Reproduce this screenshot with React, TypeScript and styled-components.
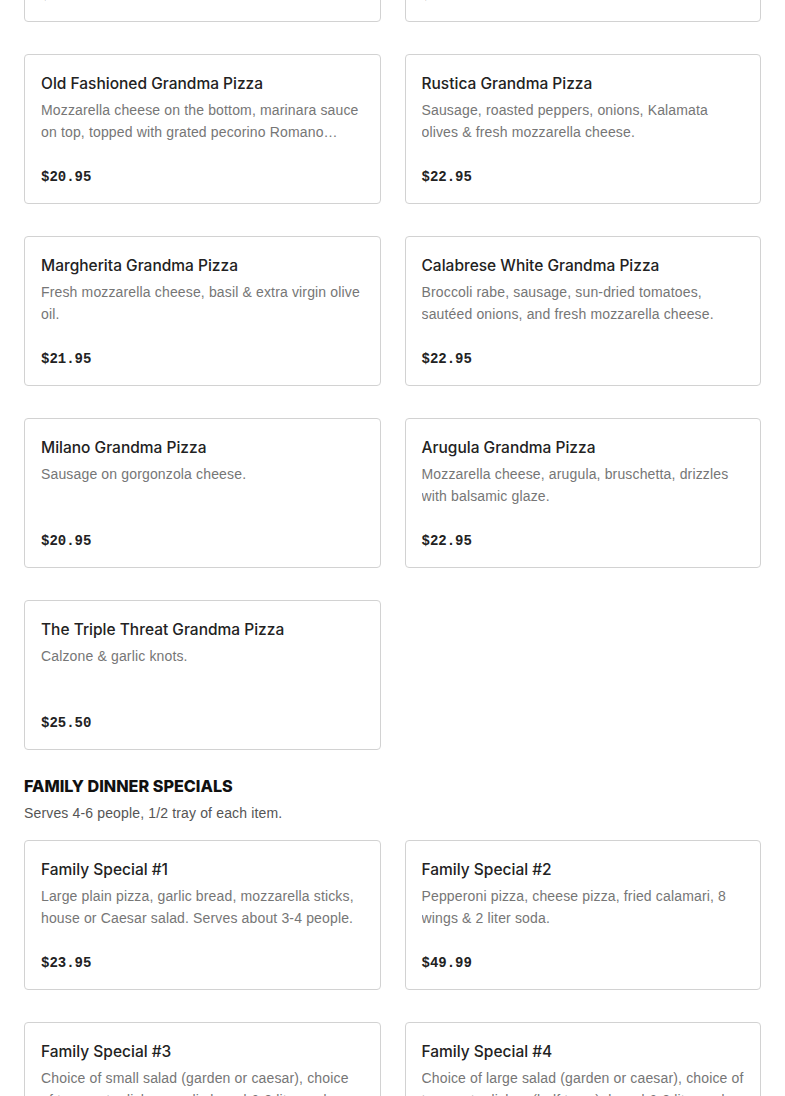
import React from 'react'
import styled, { createGlobalStyle } from 'styled-components'

const GlobalStyle = createGlobalStyle`
  html, body {
    margin: 0;
    padding: 0;
    background: #ffffff;
  }
  body {
    font-family: 'Liberation Sans', Arial, sans-serif;
    color: #222222;
    overflow: hidden;
  }
`

const Page = styled.div`
  display: flex;
  flex-direction: column;
  padding: 0 24px;
  /* the menu is scrolled part-way down */
  margin-top: -128px;
`

const Section = styled.section`
  display: flex;
  flex-direction: column;
  margin-bottom: 24px;
`

const SectionTitle = styled.h2`
  margin: 0;
  font-family: 'Inter', 'Liberation Sans', sans-serif;
  font-size: 16.2px;
  font-weight: 800;
  line-height: 24px;
  text-transform: uppercase;
  color: #111111;
`

const SectionNote = styled.p`
  margin: 5px 0 17px;
  font-size: 14px;
  line-height: 20px;
  letter-spacing: 0.15px;
  color: #555555;
`

const Grid = styled.div`
  display: grid;
  grid-template-columns: 1fr 1fr;
  column-gap: 24px;
  row-gap: 32px;
`

const Card = styled.div`
  box-sizing: border-box;
  height: 150px;
  display: flex;
  flex-direction: column;
  padding: 16px 16px 15px;
  border: 1px solid #d2d2d2;
  border-radius: 4px;
  background: #ffffff;
`

const ItemName = styled.div`
  margin-top: 1px;
  font-family: 'Inter', 'Liberation Sans', sans-serif;
  font-size: 15.5px;
  font-weight: 500;
  line-height: 24px;
  color: #222222;
`

const ItemDesc = styled.div`
  margin-top: 3px;
  min-height: 44px;
  font-size: 14px;
  line-height: 22px;
  letter-spacing: 0.15px;
  color: #767676;
  display: -webkit-box;
  -webkit-line-clamp: 2;
  -webkit-box-orient: vertical;
  overflow: hidden;
`

const Price = styled.div`
  margin-top: auto;
  font-family: 'Liberation Mono', 'DejaVu Sans Mono', monospace;
  font-size: 14px;
  font-weight: 700;
  line-height: 22px;
  color: #222222;
`

type Item = { name: string; desc: string; price: string }

const grandma: Item[] = [
  { name: 'Grandma Pizza', desc: 'Fresh mozzarella, plum tomato sauce & basil.', price: '$19.95' },
  { name: 'Vodka Grandma Pizza', desc: 'Vodka sauce & fresh mozzarella cheese.', price: '$21.95' },
  {
    name: 'Old Fashioned Grandma Pizza',
    desc: 'Mozzarella cheese on the bottom, marinara sauce on top, topped with grated pecorino Romano cheese & oregano.',
    price: '$20.95',
  },
  {
    name: 'Rustica Grandma Pizza',
    desc: 'Sausage, roasted peppers, onions, Kalamata olives & fresh mozzarella cheese.',
    price: '$22.95',
  },
  { name: 'Margherita Grandma Pizza', desc: 'Fresh mozzarella cheese, basil & extra virgin olive oil.', price: '$21.95' },
  {
    name: 'Calabrese White Grandma Pizza',
    desc: 'Broccoli rabe, sausage, sun-dried tomatoes, sautéed onions, and fresh mozzarella cheese.',
    price: '$22.95',
  },
  { name: 'Milano Grandma Pizza', desc: 'Sausage on gorgonzola cheese.', price: '$20.95' },
  {
    name: 'Arugula Grandma Pizza',
    desc: 'Mozzarella cheese, arugula, bruschetta, drizzles with balsamic glaze.',
    price: '$22.95',
  },
  { name: 'The Triple Threat Grandma Pizza', desc: 'Calzone & garlic knots.', price: '$25.50' },
]

const family: Item[] = [
  {
    name: 'Family Special #1',
    desc: 'Large plain pizza, garlic bread, mozzarella sticks, house or Caesar salad. Serves about 3-4 people.',
    price: '$23.95',
  },
  {
    name: 'Family Special #2',
    desc: 'Pepperoni pizza, cheese pizza, fried calamari, 8 wings & 2 liter soda.',
    price: '$49.99',
  },
  {
    name: 'Family Special #3',
    desc: 'Choice of small salad (garden or caesar), choice of two pasta dishes, garlic bread & 2 liter soda.',
    price: '$59.95',
  },
  {
    name: 'Family Special #4',
    desc: 'Choice of large salad (garden or caesar), choice of two pasta dishes (half trays), bread & 2 liter soda.',
    price: '$89.95',
  },
]

function MenuCard({ item }: { item: Item }) {
  return (
    <Card>
      <ItemName>{item.name}</ItemName>
      <ItemDesc>{item.desc}</ItemDesc>
      <Price>{item.price}</Price>
    </Card>
  )
}

export default function App() {
  return (
    <>
      <GlobalStyle />
      <Page>
        <Section>
          <Grid>
            {grandma.map((item) => (
              <MenuCard key={item.name} item={item} />
            ))}
          </Grid>
        </Section>
        <Section>
          <SectionTitle>Family Dinner Specials</SectionTitle>
          <SectionNote>Serves 4-6 people, 1/2 tray of each item.</SectionNote>
          <Grid>
            {family.map((item) => (
              <MenuCard key={item.name} item={item} />
            ))}
          </Grid>
        </Section>
      </Page>
    </>
  )
}
